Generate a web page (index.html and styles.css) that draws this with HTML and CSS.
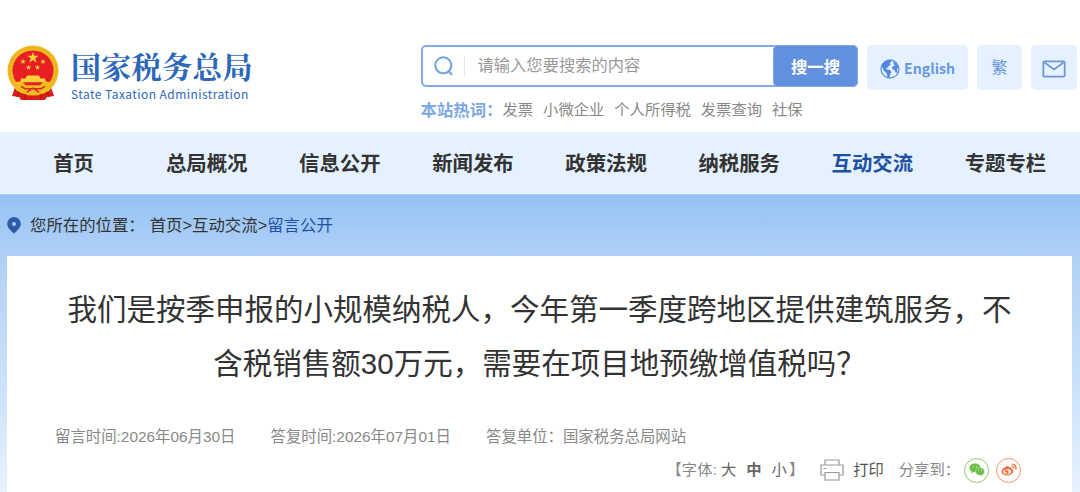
FILE: index.html
```
<!DOCTYPE html>
<html lang="zh-CN">
<head>
    <meta charset="UTF-8">
    <meta name="viewport" content="width=device-width, initial-scale=1.0">
    <title>国家税务总局 - 留言公开</title>
    <link rel="stylesheet" href="styles.css">
</head>
<body>

    <!-- 页头 -->
    <div class="header">
        <a class="logo" href="#">
            <svg class="emblem" width="52" height="56" viewBox="0 0 52 57" preserveAspectRatio="none">
                <path d="M9 40L5 52l7 1 2 3h24l2-3 7-1-4-12z" fill="#d81e1c"/>
                <circle cx="26" cy="26" r="25.5" fill="#f0b91f"/>
                <circle cx="26" cy="26" r="23.3" fill="none" stroke="#e0a51d" stroke-dasharray="2 2"/>
                <circle cx="26" cy="26" r="20.500" fill="#e71f25"/>
                <path d="M26 7l1.400 4h4.300l-3.400 2.600 1.200 4.100-3.500-2.400-3.500 2.400 1.200-4.100-3.400-2.600h4.300z" fill="#fbd13a"/>
                <g fill="#fbd13a">
                    <path id="s" d="M16 14l.7 2h2.100l-1.700 1.200.6 2.100-1.700-1.200-1.700 1.200.6-2.100-1.700-1.200h2.100z"/>
                    <use href="#s" x="20" y="0"/>
                    <use href="#s" x="5.500" y="6"/>
                    <use href="#s" x="14.500" y="6"/>
                    <path d="M20 31h12l1.500 3H38l1 4H13l1-4h4.500z"/>
                </g>
                <path d="M7 38l8-1 4 4h14l4-4 8 1-2 8-6 3-5-3-3 4h-6l-3-4-5 3-6-3z" fill="#f2bd24"/>
                <path d="M14 42l4 2.500h16l4-2.500M20 48l6-4 6 4" fill="none" stroke="#d92a1c" stroke-width="1.500"/>
                <path d="M12 48l-2 5M18 50v5M34 50v5M40 48l2 5" stroke="#b8140f" stroke-width="1.300"/>
            </svg>
            <span class="logo-text">
                <span class="logo-cn">国家税务总局</span>
                <span class="logo-en">State Taxation Administration</span>
            </span>
        </a>

        <div class="search">
            <div class="search-box">
                <svg class="search-icon" width="20" height="20" viewBox="0 0 20 20" fill="none" stroke="#6ea0e0" stroke-width="2">
                    <circle cx="9.300" cy="9.300" r="8"/>
                    <path d="M14.500 15l3.500 3.800"/>
                </svg>
                <span class="placeholder">请输入您要搜索的内容</span>
                <button class="search-button">搜一搜</button>
            </div>
            <div class="hot-words">
                <strong>本站热词：</strong>
                <a href="#">发票</a>
                <a href="#">小微企业</a>
                <a href="#">个人所得税</a>
                <a href="#">发票查询</a>
                <a href="#">社保</a>
            </div>
        </div>

        <div class="tools">
            <a class="tool english" href="#">
                <svg width="20" height="20" viewBox="0 0 20 20">
                    <circle cx="10" cy="10" r="9" fill="#e5f1ff" stroke="#6095e0" stroke-width="1.300"/>
                    <path d="M1.500 7C3 3 6 1.200 10.500 1l1 2-2 1 1.500 1.500-2 1-1 2-2 .5 1 1.500 3 .5 1.500 2-1.500 2.500-.5 3.500-2-1-1-4-2.500-2z" fill="#5089df"/>
                    <path d="M13.500 2l3 2.500 2 4-1.500 1.500.5 3-1.500 1-1.500-3-2.500-1 .5-2.500 2.500-1-1.500-2z" fill="#5089df"/>
                </svg>
                <span>English</span>
            </a>
            <a class="tool fan" href="#">繁</a>
            <a class="tool mail" href="#">
                <svg width="24" height="18" viewBox="0 0 24 18" fill="none" stroke="#6c98d7" stroke-width="1.800">
                    <rect x="1.300" y="1.300" width="21.400" height="15.400" rx="1.200"/>
                    <path d="M2.500 2.500l9.500 7 9.500-7"/>
                </svg>
            </a>
        </div>
    </div>

    <!-- 导航 -->
    <div class="nav">
        <a href="#">首页</a>
        <a href="#">总局概况</a>
        <a href="#">信息公开</a>
        <a href="#">新闻发布</a>
        <a href="#">政策法规</a>
        <a href="#">纳税服务</a>
        <a class="active" href="#">互动交流</a>
        <a href="#">专题专栏</a>
    </div>

    <div class="main">
        <!-- 当前位置 -->
        <div class="location">
            <svg width="14" height="17" viewBox="0 0 14 17">
                <path d="M7 0a6.800 6.800 0 0 1 6.800 6.800C13.800 11 10 13.500 7 16.800 4 13.500.2 11 .2 6.800A6.800 6.800 0 0 1 7 0z" fill="#2a5caa"/>
                <circle cx="7" cy="7" r="1.900" fill="#b3d2f6"/>
            </svg>
            <span class="location-label">您所在的位置：</span>
            <span><a href="#">首页</a>&gt;<a href="#">互动交流</a>&gt;<a class="current" href="#">留言公开</a></span>
        </div>

        <!-- 正文 -->
        <div class="article">
            <h1>我们是按季申报的小规模纳税人，今年第一季度跨地区提供建筑服务，不<br>含税销售额30万元，需要在项目地预缴增值税吗？</h1>
            <div class="info">
                <span>留言时间:2026年06月30日</span>
                <span>答复时间:2026年07月01日</span>
                <span>答复单位：国家税务总局网站</span>
            </div>
            <div class="actions">
                <div class="font-size">【字体: <a href="#">大</a><a class="on" href="#">中</a><a href="#">小</a>】</div>
                <a class="print" href="#">
                    <svg width="24" height="22" viewBox="0 0 24 22" fill="none" stroke="#999" stroke-width="1.200">
                        <path d="M5 6V1h14v5M5 16H1V6h22v10h-4"/>
                        <path d="M5 13.500h14V21H5zM3.500 9.500h3"/>
                    </svg>
                    <span>打印</span>
                </a>
                <span class="share-label">分享到：</span>
                <a class="share wechat" href="#">
                    <svg width="16" height="14" viewBox="0 0 16 14">
                        <path d="M6 .5c3.200 0 5.500 2 5.500 4.400S9.200 9.300 6 9.300l-1.600-.2-2.200 1.300.6-2C1.200 7.500.5 6.300.5 4.900.5 2.500 2.800.500 6 .5z" fill="#6cbd45"/>
                        <path d="M11 4.800c2.600 0 4.600 1.700 4.600 3.800 0 1.200-.7 2.200-1.700 2.900l.4 1.700-1.800-1-1.500.2c-2.600 0-4.600-1.700-4.600-3.800S8.400 4.800 11 4.800z" fill="#6cbd45" stroke="#fff" stroke-width=".4"/>
                        <g fill="#fff">
                            <circle cx="4.200" cy="3.800" r=".6"/>
                            <circle cx="7.800" cy="3.800" r=".6"/>
                            <circle cx="9.600" cy="7.600" r=".5"/>
                            <circle cx="12.500" cy="7.600" r=".5"/>
                        </g>
                    </svg>
                </a>
                <a class="share weibo" href="#">
                    <svg width="16" height="14" viewBox="0 0 16 14" fill="none" stroke="#f26b3a">
                        <path d="M6 3.300c1.300-.5 2 .1 1.700 1.300 2-.7 3.300-.2 2.800 1.300 1.500.4 2.200 1.600 1.600 3-.8 2-3.200 3.600-6 3.600C3.200 12.500.6 11 .6 8.700.6 6.600 3.300 4.200 6 3.300z" fill="#f26b3a" stroke="none"/>
                        <ellipse cx="6.200" cy="8.800" rx="4" ry="2.500" fill="#fff" stroke="none" transform="rotate(-8 6.200 8.800)"/>
                        <circle cx="5.700" cy="9" r="2.100" fill="#f26b3a" stroke="none"/>
                        <circle cx="5.100" cy="9.400" r=".7" fill="#fff" stroke="none"/>
                        <path d="M10.500 1.200a4 4 0 0 1 4.400 5" stroke-width="1.400"/>
                        <path d="M10.800 3.400a1.900 1.900 0 0 1 2 2.400" stroke-width="1.200"/>
                    </svg>
                </a>
            </div>
        </div>
    </div>

</body>
</html>
```
FILE: styles.css
```
* {
    box-sizing: border-box;
}

body {
    margin: 0;
    height: 492px;
    overflow: hidden;
    display: flex;
    flex-direction: column;
    font-family: "Liberation Sans", "Noto Sans CJK SC", sans-serif;
    color: #333;
    background: #fff;
}

a {
    color: inherit;
    text-decoration: none;
}

svg {
    display: block;
    flex-shrink: 0;
}

/* 页头 */
.header {
    height: 132px;
    flex-shrink: 0;
    display: flex;
    align-items: flex-start;
    padding: 45px 3px 0 7px;
}

.logo {
    display: flex;
    width: 414px;
    color: #2c67b9;
}

.logo-text {
    display: flex;
    flex-direction: column;
    margin-left: 12px;
    padding-top: 1px;
    white-space: nowrap;
}

.logo-cn {
    font-family: "Noto Serif CJK SC", "Noto Sans CJK SC", serif;
    font-size: 30px;
    font-weight: bold;
    line-height: 39px;
    letter-spacing: 0.3px;
}

.logo-en {
    font-family: "Noto Sans CJK SC", sans-serif;
    font-size: 12px;
    font-weight: 400;
    line-height: 18px;
    letter-spacing: 0.45px;
}

.search {
    width: 438px;
    margin-right: 8px;
}

.search-box {
    height: 42px;
    display: flex;
    align-items: center;
    border: 2px solid #84abe2;
    border-radius: 5px;
    padding-left: 11px;
}

.placeholder {
    flex: 1;
    margin-left: 10px;
    padding: 0 0 2px 13px;
    border-left: 1px solid #e5e5e5;
    font-size: 16.3px;
    line-height: 18px;
    color: #999;
}

.search-button {
    width: 85px;
    height: 42px;
    margin: -2px;
    padding: 0;
    border: 1px solid #84abe2;
    border-radius: 5px;
    background: #6090de;
    color: #fff;
    font-family: "Noto Sans CJK SC", sans-serif;
    font-size: 16.4px;
    font-weight: bold;
}

.hot-words {
    display: flex;
    gap: 10px;
    margin-top: 11px;
    font-size: 15.3px;
    line-height: 24px;
    color: #888;
    white-space: nowrap;
}

.hot-words strong {
    margin-right: -10px;
    font-size: 16.4px;
    color: #7ba8e2;
}

.tools {
    display: flex;
    gap: 9px;
    margin-left: 1px;
}

.tool {
    height: 45px;
    display: flex;
    align-items: center;
    justify-content: center;
    border-radius: 5px;
    background: #e5f1ff;
    color: #6697e0;
}

.english {
    width: 101px;
    gap: 4px;
    padding-top: 3px;
    font-family: "Noto Sans CJK SC", sans-serif;
    font-size: 14.1px;
    font-weight: bold;
}

.english span {
    margin-top: -2px;
}

.fan {
    width: 45px;
    padding-bottom: 4px;
    font-size: 16px;
}

.mail {
    width: 46px;
    padding-top: 3px;
}

/* 导航 */
.nav {
    height: 62px;
    flex-shrink: 0;
    display: flex;
    padding: 0 8px 0 7px;
    background: #e5f1ff;
}

.nav a {
    flex: 1;
    text-align: center;
    font-size: 20.4px;
    font-weight: bold;
    line-height: 64px;
}

.nav .active {
    color: #1d50a2;
}

/* 内容区 */
.main {
    flex: 1;
    min-height: 0;
    display: flex;
    flex-direction: column;
    padding: 0 8px 0 7px;
    background: linear-gradient(#95c2f4, #b0d1f6 21%, #cce2fa 65%, #e8f2fd);
    border-top: 1px solid #a5ccf8;
}

.location {
    height: 61px;
    flex-shrink: 0;
    display: flex;
    align-items: center;
    font-size: 16.4px;
}

.location span {
    margin-top: -3px;
}

.location .location-label {
    margin: -3px 5px 0 9px;
}

.current {
    color: #1d50a2;
}

.article {
    flex: 1;
    min-height: 0;
    padding: 27px 48px 0;
    background: #fff;
}

h1 {
    margin: 0 -20px;
    text-align: center;
    font-size: 29.5px;
    font-weight: normal;
    line-height: 54px;
    white-space: nowrap;
}

.info {
    display: flex;
    gap: 35px;
    margin-top: 34px;
    font-size: 15.4px;
    line-height: 24px;
    color: #888;
}

.actions {
    display: flex;
    align-items: center;
    justify-content: flex-end;
    margin-top: 8px;
    padding-right: 3px;
    font-size: 15.3px;
    line-height: 26px;
    color: #888;
}

.font-size a {
    margin-right: 10px;
    color: #666;
}

.font-size a:last-child {
    margin-right: 2px;
}

.font-size .on {
    font-weight: bold;
}

.print {
    display: flex;
    align-items: center;
    gap: 9px;
    margin: 0 15px 0 16px;
    color: #555;
}

.share-label {
    margin-right: 4px;
}

.share {
    width: 25px;
    height: 25px;
    display: flex;
    align-items: center;
    justify-content: center;
    border: 1px solid #8ccd6c;
    border-radius: 50%;
}

.weibo {
    margin-left: 7px;
    border-color: #f79470;
}
```
